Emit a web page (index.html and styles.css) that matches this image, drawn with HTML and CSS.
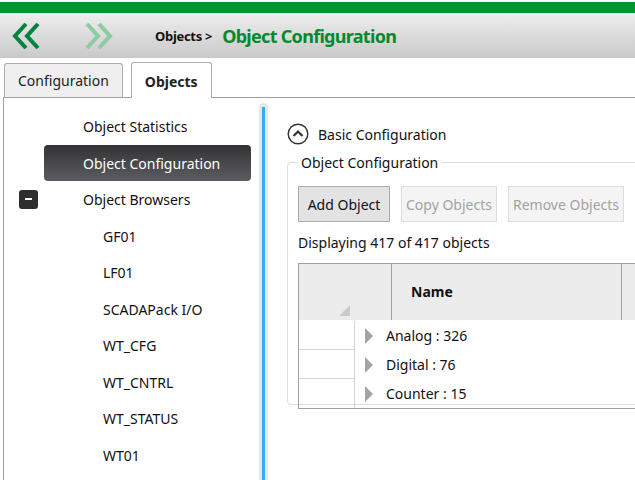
FILE: index.html
```html
<!DOCTYPE html>
<html>
<head>
    <title>Object Configuration</title>
    <link rel="stylesheet" href="styles.css">
</head>
<body>
    <div class="accent"></div>
    <div class="header">
        <svg class="nav-arrow" width="30" height="26" viewBox="0 0 30 26">
            <path d="M14 1 L3 13 L14 25 M26 1 L15 13 L26 25" fill="none" stroke="#00843d" stroke-width="4"/>
        </svg>
        <svg class="nav-arrow fwd" width="30" height="26" viewBox="0 0 30 26">
            <path d="M3 1 L14 13 L3 25 M15 1 L26 13 L15 25" fill="none" stroke="#8ccba4" stroke-width="4"/>
        </svg>
        <span class="crumb">Objects &gt;</span>
        <span class="title">Object Configuration</span>
    </div>

    <div class="tabs">
        <div class="tab">Configuration</div>
        <div class="tab active">Objects</div>
    </div>

    <div class="main">
        <div class="sidebar">
            <div class="nav-item">Object Statistics</div>
            <div class="nav-item selected">Object Configuration</div>
            <div class="nav-item"><span class="toggle"></span>Object Browsers</div>
            <div class="nav-item child">GF01</div>
            <div class="nav-item child">LF01</div>
            <div class="nav-item child">SCADAPack I/O</div>
            <div class="nav-item child">WT_CFG</div>
            <div class="nav-item child">WT_CNTRL</div>
            <div class="nav-item child">WT_STATUS</div>
            <div class="nav-item child">WT01</div>
        </div>
        <div class="scrollbar"><div class="thumb"></div></div>

        <div class="content">
            <div class="section-head">
                <svg width="22" height="22" viewBox="0 0 22 22">
                    <circle cx="11" cy="11" r="9.8" fill="none" stroke="#333" stroke-width="1.4"/>
                    <path d="M6.5 13 L11 8.5 L15.5 13" fill="none" stroke="#333" stroke-width="2.2"/>
                </svg>
                <span>Basic Configuration</span>
            </div>

            <fieldset class="group">
                <legend>Object Configuration</legend>
                <div class="toolbar">
                    <button>Add Object</button>
                    <button disabled>Copy Objects</button>
                    <button disabled>Remove Objects</button>
                    <button disabled></button>
                </div>
                <div class="count">Displaying 417 of 417 objects</div>

                <div class="grid">
                    <div class="grid-head">
                        <div class="corner"><span class="sort"></span></div>
                        <div class="col-name">Name</div>
                        <div class="col-next"></div>
                    </div>
                    <div class="grid-row">
                        <div class="cell-sel"></div>
                        <div class="cell-group"><span class="expander"></span>Analog : 326</div>
                    </div>
                    <div class="grid-row">
                        <div class="cell-sel"></div>
                        <div class="cell-group"><span class="expander"></span>Digital : 76</div>
                    </div>
                    <div class="grid-row">
                        <div class="cell-sel"></div>
                        <div class="cell-group"><span class="expander"></span>Counter : 15</div>
                    </div>
                </div>
            </fieldset>
        </div>
    </div>
</body>
</html>
```

FILE: styles.css
```css
body {
    margin: 0;
    width: 635px;
    height: 480px;
    overflow: hidden;
    font-family: "Noto Sans", "Open Sans", sans-serif;
    font-size: 14px;
    color: #111;
    background: #fff;
}
.accent {
    margin-top: 2px;
    height: 11px;
    background: #009530;
}
.header {
    height: 45px;
    display: flex;
    align-items: center;
    background: linear-gradient(#eeeeee, #c9c9c9);
}
.nav-arrow {
    margin-left: 12px;
}
.nav-arrow.fwd {
    margin-left: 42px;
}
.crumb {
    margin-left: 41px;
    font-size: 13px;
    font-weight: bold;
    letter-spacing: -0.3px;
}
.title {
    margin-left: 10px;
    font-size: 18px;
    font-weight: bold;
    color: #008a2e;
    letter-spacing: -0.7px;
}
.tabs {
    display: flex;
    align-items: flex-end;
    margin-top: 4px;
    padding-left: 4px;
    height: 35px;
}
.tab {
    height: 33px;
    line-height: 33px;
    padding: 0 13px;
    margin-right: 8px;
    background: #efefef;
    border: 1px solid #acacac;
    border-bottom: none;
    border-radius: 3px 3px 0 0;
    color: #222;
}
.tab.active {
    height: 35px;
    line-height: 37px;
    background: #fff;
    font-weight: bold;
    margin-bottom: -1px;
    position: relative;
}
.main {
    display: flex;
    margin-left: 3px;
    border-left: 1px solid #a0a0a0;
    border-top: 1px solid #a0a0a0;
    height: 400px;
}
.sidebar {
    flex-shrink: 0;
    width: 255px;
    padding-top: 10px;
    white-space: nowrap;
}
.nav-item {
    height: 36.5px;
    line-height: 38px;
    padding-left: 79px;
    position: relative;
}
.nav-item.child {
    padding-left: 99px;
}
.nav-item.selected {
    margin-left: 40px;
    margin-right: 8px;
    padding-left: 39px;
    color: #fff;
    border-radius: 4px;
    background: linear-gradient(#333335, #5c5d60);
}
.toggle {
    position: absolute;
    left: 15px;
    top: 9px;
    width: 19px;
    height: 19px;
    border-radius: 3px;
    background: #2e2e2e;
}
.toggle::after {
    content: "";
    position: absolute;
    left: 6px;
    top: 8px;
    width: 7px;
    height: 2px;
    background: #fff;
}
.scrollbar {
    flex-shrink: 0;
    width: 9px;
    margin-top: 5px;
    background: #e6e6e6;
    border-radius: 5px 5px 0 0;
    display: flex;
    justify-content: center;
    padding-top: 4px;
}
.thumb {
    width: 3px;
    background: #35ade6;
}
.content {
    flex: 1;
    min-width: 0;
    overflow: hidden;
    padding-left: 19px;
    padding-top: 25px;
}
.section-head {
    display: flex;
    align-items: center;
    gap: 9px;
    height: 22px;
    font-size: 14px;
}
.group {
    margin: 8px 0 0 0;
    padding: 14px 0 0 10px;
    width: 500px;
    height: 236px;
    border: 1px solid #d8dee3;
    border-radius: 4px;
}
.group legend {
    padding: 0 3px;
    margin-left: 0;
    font-size: 14px;
}
.toolbar {
    display: flex;
    gap: 11px;
    white-space: nowrap;
}
.toolbar button {
    flex-shrink: 0;
    font-family: inherit;
    font-size: 14px;
    height: 36px;
    min-width: 92px;
    padding: 0 4px;
    border: 1px solid #adadad;
    background: #e3e3e3;
    color: #111;
}
.toolbar button:disabled {
    background: #f4f4f4;
    border-color: #dcdcdc;
    color: #a2a2a2;
}
.count {
    margin-top: 11px;
    height: 20px;
}
.grid {
    margin-top: 10px;
    border: 1px solid #a0a0a0;
    border-right: none;
}
.grid-head {
    display: flex;
    height: 56px;
    background: #ececec;
    border-bottom: 1px solid #fff;
}
.corner {
    width: 92px;
    border-right: 1px solid #a0a0a0;
    position: relative;
}
.sort {
    position: absolute;
    right: 41px;
    bottom: 4px;
    width: 0;
    height: 0;
    border-left: 11px solid transparent;
    border-bottom: 11px solid #cacaca;
}
.col-name {
    width: 210px;
    padding-left: 19px;
    line-height: 56px;
    font-weight: bold;
    border-right: 1px solid #a0a0a0;
}
.grid-row {
    display: flex;
    height: 29px;
}
.cell-sel {
    width: 56px;
    border-right: 1px solid #d4d4d4;
    border-bottom: 1px solid #d4d4d4;
    box-sizing: border-box;
}
.grid-row:last-child .cell-sel {
    border-bottom: none;
}
.cell-group {
    display: flex;
    align-items: center;
    padding-left: 10px;
    white-space: nowrap;
}
.expander {
    width: 0;
    height: 0;
    border-top: 8px solid transparent;
    border-bottom: 8px solid transparent;
    border-left: 8px solid #a4a4a8;
    margin-right: 13px;
}
```
